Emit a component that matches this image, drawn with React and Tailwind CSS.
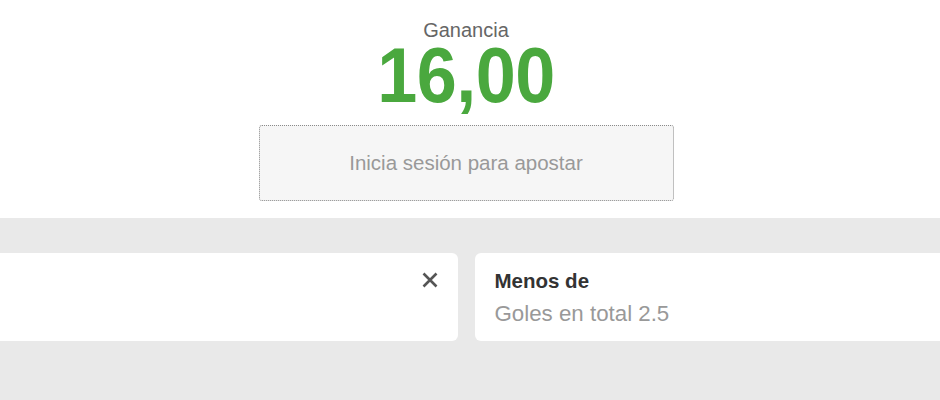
import React from "react";

export default function App() {
  return (
    <div className="w-[940px] h-[400px] overflow-hidden bg-white font-['Liberation_Sans',Arial,sans-serif]">
      <div className="relative h-[218px] -ml-[20px] w-[972px] flex flex-col items-center">
        <span className="absolute left-[6px] top-[19px] text-[17px] leading-[20px] text-[#888]">2</span>
        <div className="mt-[20px] text-[20px] leading-[20px] text-[#666]">Ganancia</div>
        <div className="text-[72px] leading-[71px] font-bold text-[#4aa83e] tracking-[-0.5px] scale-y-[1.08]">16,00</div>
        <div className="mt-[14px] w-[415px] h-[76px] border border-dotted border-[#8a8a8a] rounded-[3px] bg-[#f6f6f6] flex items-center justify-center">
          <span className="text-[20.5px] text-[#999]">Inicia sesión para apostar</span>
        </div>
      </div>
      <div className="h-[182px] bg-[#e9e9e9] pt-[35px]">
        <div className="-ml-[20px] w-[972px] grid grid-cols-2 gap-[17px]">
          <div className="h-[88px] bg-white rounded-[6px] flex justify-end pt-[19px] pr-[19px]">
            <svg width="18" height="18" viewBox="0 0 18 18" className="-mt-[1px]">
              <path d="M2.5 2.5 L15.5 15.5 M15.5 2.5 L2.5 15.5" stroke="#555" strokeWidth="2.6" strokeLinecap="butt" />
            </svg>
          </div>
          <div className="h-[88px] bg-white rounded-[6px] pl-[20px] pt-[16px]">
            <div className="text-[20.5px] leading-[24px] font-bold text-[#333]">Menos de</div>
            <div className="mt-[8px] text-[22.3px] leading-[26px] text-[#999]">Goles en total 2.5</div>
          </div>
        </div>
      </div>
    </div>
  );
}
